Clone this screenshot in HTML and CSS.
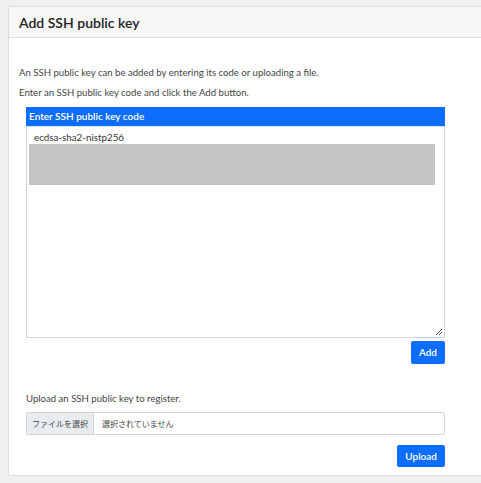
FILE: index.html
```html
<!DOCTYPE html>
<html lang="en">
<head>
<meta charset="utf-8">
<title>Add SSH public key</title>
<link rel="stylesheet" href="styles.css">
</head>
<body>
<div class="card">
  <div class="card-header"><h1 class="title">Add SSH public key</h1></div>
  <div class="card-body">
    <p class="desc first">An SSH public key can be added by entering its code or uploading a file.</p>
    <p class="desc">Enter an SSH public key code and click the Add button.</p>
    <div class="key-panel">
      <div class="key-label">Enter SSH public key code</div>
      <div class="key-area">
        <div class="key-text">ecdsa-sha2-nistp256</div>
        <div class="key-mask"></div>
        <svg class="grip" width="8" height="8" viewBox="0 0 8 8"><path d="M7 1L1 7M7 4L4 7" stroke="#555" stroke-width="1" fill="none"/></svg>
      </div>
      <div class="actions"><button class="btn">Add</button></div>
    </div>
    <p class="upload-label">Upload an SSH public key to register.</p>
    <div class="file-input">
      <span class="file-btn">ファイルを選択</span>
      <span class="file-name">選択されていません</span>
    </div>
    <div class="actions upload-actions"><button class="btn">Upload</button></div>
  </div>
</div>
</body>
</html>
```
FILE: styles.css
```css
html, body {
  margin: 0;
  padding: 0;
  background: #f0f0f0;
  overflow: hidden;
  font-family: Lato, "Noto Sans", "Noto Sans CJK JP", sans-serif;
  color: #333;
}
.card {
  margin: 6px 0 0 8px;
  width: 490px;
  height: 470px;
  box-sizing: border-box;
  background: #fff;
  border: 1px solid #dcdcdc;
  display: flex;
  flex-direction: column;
}
.card-header {
  height: 30px;
  background: #f7f7f7;
  border-bottom: 1px solid #dddddd;
  display: flex;
  align-items: center;
  padding-left: 10px;
}
.title {
  margin: 0;
  font-size: 14px;
  font-weight: 600;
  color: #222;
}
.card-body {
  padding: 0 36px 0 10px;
  display: flex;
  flex-direction: column;
}
.desc {
  margin: 0;
  font-size: 9.6px;
  line-height: 20px;
  color: #444;
}
.desc.first {
  margin-top: 25px;
}
.key-panel {
  margin: 4px 0 0 7px;
  width: 419px;
}
.key-label {
  height: 19px;
  background: #0d6efd;
  color: #fff;
  font-size: 10px;
  font-weight: 600;
  line-height: 19px;
  padding-left: 3px;
}
.key-area {
  position: relative;
  height: 210px;
  border: 1px solid #ced4da;
  border-top-color: #dde1e6;
  background: #fff;
}
.key-text {
  font-size: 9.8px;
  color: #333;
  padding: 4px 0 0 7px;
  line-height: 12px;
}
.key-mask {
  margin: 1px 0 0 2px;
  width: 406px;
  height: 41px;
  background: #c4c4c4;
}
.grip {
  position: absolute;
  right: 1px;
  bottom: 1px;
}
.actions {
  display: flex;
  justify-content: flex-end;
  margin-top: 3px;
}
.btn {
  font-family: inherit;
  font-size: 10px;
  font-weight: 600;
  color: #fff;
  background: #0d6efd;
  border: none;
  border-radius: 2px;
  height: 23px;
  padding: 0 8px;
  line-height: 23px;
}
.upload-label {
  margin: 27px 0 0 7px;
  font-size: 9.6px;
  line-height: 16px;
  color: #444;
}
.file-input {
  margin: 5px 0 0 7px;
  width: 419px;
  height: 23px;
  box-sizing: border-box;
  border: 1px solid #ced4da;
  border-radius: 2px;
  display: flex;
  font-family: "Noto Sans CJK JP", sans-serif;
  font-size: 8px;
  color: #444;
}
.file-btn {
  width: 67px;
  box-sizing: border-box;
  background: #e9ecef;
  border-right: 1px solid #ced4da;
  display: flex;
  align-items: center;
  justify-content: center;
}
.file-name {
  display: flex;
  align-items: center;
  padding-left: 8px;
}
.upload-actions {
  margin-top: 10px;
  width: 426px;
}
.upload-actions .btn {
  height: 22px;
  line-height: 22px;
}
```
